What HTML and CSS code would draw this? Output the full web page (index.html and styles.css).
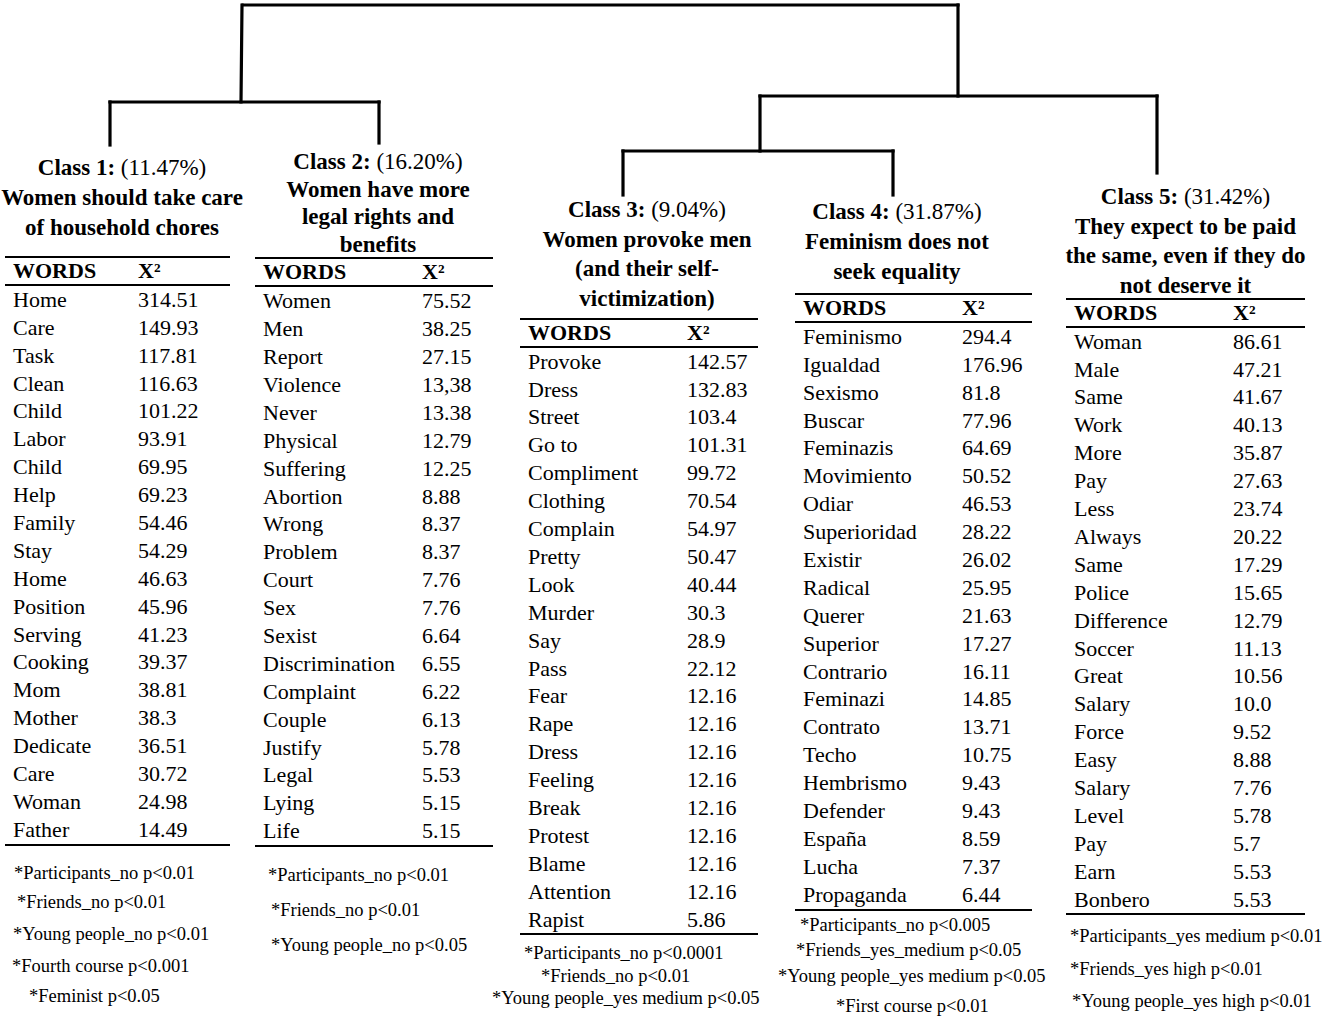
FILE: index.html
```html
<!DOCTYPE html>
<html lang="en">
<head>
<meta charset="utf-8">
<title>Classes dendrogram</title>
<link rel="stylesheet" href="styles.css">
</head>
<body>
<div class="page">
  <svg class="tree" width="1325" height="200" viewBox="0 0 1325 200" aria-hidden="true">
    <g fill="none" stroke="#000" stroke-width="3.2" stroke-linecap="square">
      <path d="M243 5 H958"/>
      <path d="M242 5 L241 102"/>
      <path d="M110 102 H379"/>
      <path d="M110 102 V145"/>
      <path d="M379 102 V143"/>
      <path d="M958 5 V96"/>
      <path d="M760 96 H1157"/>
      <path d="M1157 96 V173"/>
      <path d="M760 96 V151"/>
      <path d="M623 151 H893"/>
      <path d="M623 151 V195"/>
      <path d="M893 151 V195"/>
    </g>
  </svg>

  <div class="cols">
    <section class="col c1">
      <h2 class="head"><b>Class 1:</b> <span class="pct">(11.47%)</span><br>Women should take care<br>of household chores</h2>
      <div class="tbl">
        <div class="th">WORDS</div><div class="th">X²</div>
        <div>Home</div><div>314.51</div>
        <div>Care</div><div>149.93</div>
        <div>Task</div><div>117.81</div>
        <div>Clean</div><div>116.63</div>
        <div>Child</div><div>101.22</div>
        <div>Labor</div><div>93.91</div>
        <div>Child</div><div>69.95</div>
        <div>Help</div><div>69.23</div>
        <div>Family</div><div>54.46</div>
        <div>Stay</div><div>54.29</div>
        <div>Home</div><div>46.63</div>
        <div>Position</div><div>45.96</div>
        <div>Serving</div><div>41.23</div>
        <div>Cooking</div><div>39.37</div>
        <div>Mom</div><div>38.81</div>
        <div>Mother</div><div>38.3</div>
        <div>Dedicate</div><div>36.51</div>
        <div>Care</div><div>30.72</div>
        <div>Woman</div><div>24.98</div>
        <div>Father</div><div>14.49</div>
      </div>
      <div class="notes">
        <p class="fn">*Participants_no p&lt;0.01</p>
        <p class="fn">*Friends_no p&lt;0.01</p>
        <p class="fn">*Young people_no p&lt;0.01</p>
        <p class="fn">*Fourth course p&lt;0.001</p>
        <p class="fn">*Feminist p&lt;0.05</p>
      </div>
    </section>

    <section class="col c2">
      <h2 class="head"><b>Class 2:</b> <span class="pct">(16.20%)</span><br>Women have more<br>legal rights and<br>benefits</h2>
      <div class="tbl">
        <div class="th">WORDS</div><div class="th">X²</div>
        <div>Women</div><div>75.52</div>
        <div>Men</div><div>38.25</div>
        <div>Report</div><div>27.15</div>
        <div>Violence</div><div>13,38</div>
        <div>Never</div><div>13.38</div>
        <div>Physical</div><div>12.79</div>
        <div>Suffering</div><div>12.25</div>
        <div>Abortion</div><div>8.88</div>
        <div>Wrong</div><div>8.37</div>
        <div>Problem</div><div>8.37</div>
        <div>Court</div><div>7.76</div>
        <div>Sex</div><div>7.76</div>
        <div>Sexist</div><div>6.64</div>
        <div>Discrimination</div><div>6.55</div>
        <div>Complaint</div><div>6.22</div>
        <div>Couple</div><div>6.13</div>
        <div>Justify</div><div>5.78</div>
        <div>Legal</div><div>5.53</div>
        <div>Lying</div><div>5.15</div>
        <div>Life</div><div>5.15</div>
      </div>
      <div class="notes">
        <p class="fn">*Participants_no p&lt;0.01</p>
        <p class="fn">*Friends_no p&lt;0.01</p>
        <p class="fn">*Young people_no p&lt;0.05</p>
      </div>
    </section>

    <section class="col c3">
      <h2 class="head"><b>Class 3:</b> <span class="pct">(9.04%)</span><br>Women provoke men<br>(and their self-<br>victimization)</h2>
      <div class="tbl">
        <div class="th">WORDS</div><div class="th">X²</div>
        <div>Provoke</div><div>142.57</div>
        <div>Dress</div><div>132.83</div>
        <div>Street</div><div>103.4</div>
        <div>Go to</div><div>101.31</div>
        <div>Compliment</div><div>99.72</div>
        <div>Clothing</div><div>70.54</div>
        <div>Complain</div><div>54.97</div>
        <div>Pretty</div><div>50.47</div>
        <div>Look</div><div>40.44</div>
        <div>Murder</div><div>30.3</div>
        <div>Say</div><div>28.9</div>
        <div>Pass</div><div>22.12</div>
        <div>Fear</div><div>12.16</div>
        <div>Rape</div><div>12.16</div>
        <div>Dress</div><div>12.16</div>
        <div>Feeling</div><div>12.16</div>
        <div>Break</div><div>12.16</div>
        <div>Protest</div><div>12.16</div>
        <div>Blame</div><div>12.16</div>
        <div>Attention</div><div>12.16</div>
        <div>Rapist</div><div>5.86</div>
      </div>
      <div class="notes">
        <p class="fn">*Participants_no p&lt;0.0001</p>
        <p class="fn">*Friends_no p&lt;0.01</p>
        <p class="fn">*Young people_yes medium p&lt;0.05</p>
      </div>
    </section>

    <section class="col c4">
      <h2 class="head"><b>Class 4:</b> <span class="pct">(31.87%)</span><br>Feminism does not<br>seek equality</h2>
      <div class="tbl">
        <div class="th">WORDS</div><div class="th">X²</div>
        <div>Feminismo</div><div>294.4</div>
        <div>Igualdad</div><div>176.96</div>
        <div>Sexismo</div><div>81.8</div>
        <div>Buscar</div><div>77.96</div>
        <div>Feminazis</div><div>64.69</div>
        <div>Movimiento</div><div>50.52</div>
        <div>Odiar</div><div>46.53</div>
        <div>Superioridad</div><div>28.22</div>
        <div>Existir</div><div>26.02</div>
        <div>Radical</div><div>25.95</div>
        <div>Querer</div><div>21.63</div>
        <div>Superior</div><div>17.27</div>
        <div>Contrario</div><div>16.11</div>
        <div>Feminazi</div><div>14.85</div>
        <div>Contrato</div><div>13.71</div>
        <div>Techo</div><div>10.75</div>
        <div>Hembrismo</div><div>9.43</div>
        <div>Defender</div><div>9.43</div>
        <div>España</div><div>8.59</div>
        <div>Lucha</div><div>7.37</div>
        <div>Propaganda</div><div>6.44</div>
      </div>
      <div class="notes">
        <p class="fn">*Participants_no p&lt;0.005</p>
        <p class="fn">*Friends_yes_medium p&lt;0.05</p>
        <p class="fn">*Young people_yes medium p&lt;0.05</p>
        <p class="fn">*First course p&lt;0.01</p>
      </div>
    </section>

    <section class="col c5">
      <h2 class="head"><b>Class 5:</b> <span class="pct">(31.42%)</span><br>They expect to be paid<br>the same, even if they do<br>not deserve it</h2>
      <div class="tbl">
        <div class="th">WORDS</div><div class="th">X²</div>
        <div>Woman</div><div>86.61</div>
        <div>Male</div><div>47.21</div>
        <div>Same</div><div>41.67</div>
        <div>Work</div><div>40.13</div>
        <div>More</div><div>35.87</div>
        <div>Pay</div><div>27.63</div>
        <div>Less</div><div>23.74</div>
        <div>Always</div><div>20.22</div>
        <div>Same</div><div>17.29</div>
        <div>Police</div><div>15.65</div>
        <div>Difference</div><div>12.79</div>
        <div>Soccer</div><div>11.13</div>
        <div>Great</div><div>10.56</div>
        <div>Salary</div><div>10.0</div>
        <div>Force</div><div>9.52</div>
        <div>Easy</div><div>8.88</div>
        <div>Salary</div><div>7.76</div>
        <div>Level</div><div>5.78</div>
        <div>Pay</div><div>5.7</div>
        <div>Earn</div><div>5.53</div>
        <div>Bonbero</div><div>5.53</div>
      </div>
      <div class="notes">
        <p class="fn">*Participants_yes medium p&lt;0.01</p>
        <p class="fn">*Friends_yes high p&lt;0.01</p>
        <p class="fn">*Young people_yes high p&lt;0.01</p>
      </div>
    </section>
  </div>
</div>
</body>
</html>
```

FILE: styles.css
```css
html, body {
  margin: 0;
  padding: 0;
  background: #fff;
}

body {
  width: 1325px;
  height: 1021px;
  overflow: hidden;
  font-family: "Liberation Serif", "Times New Roman", serif;
  color: #000;
}

.page {
  position: relative;
  width: 1325px;
  height: 1021px;
}

.tree {
  position: absolute;
  left: 0;
  top: 0;
}

.cols {
  display: flex;
  align-items: flex-start;
  padding-left: 5px;
}

.col {
  flex: none;
}

.head {
  margin: 0;
  font-size: 23px;
  font-weight: bold;
  line-height: 30px;
  text-align: center;
  white-space: nowrap;
}

.head b {
  font-weight: bold;
}

.head .pct {
  font-weight: normal;
}

.tbl {
  display: grid;
  grid-template-columns: 159px 1fr;
  grid-auto-rows: 27.9px;
  border-top: 2px solid #000;
  border-bottom: 2px solid #000;
  padding-left: 8px;
  font-size: 22px;
  line-height: 27.9px;
  white-space: nowrap;
}

.tbl .th {
  font-weight: bold;
  height: 26px;
  line-height: 26px;
  border-bottom: 2px solid #000;
}

.tbl .th:first-child {
  margin-left: -8px;
  padding-left: 8px;
}

.notes {
  font-size: 18.5px;
  white-space: nowrap;
}

.fn {
  margin: 0;
  line-height: 30px;
}

/* Column 1 */
.c1 {
  width: 225px;
  padding-top: 153px;
}
.c1 .head {
  margin: 0 -19px 13px -10px;
}
.c1 .tbl {
  grid-template-columns: 125px 1fr;
}
.c1 .notes { padding-top: 12px; }
.c1 .fn:nth-child(1) { padding-left: 9px; }
.c1 .fn:nth-child(2) { padding-left: 12px; line-height: 28px; }
.c1 .fn:nth-child(3) { padding-left: 8px; line-height: 33px; margin-top: 2px; }
.c1 .fn:nth-child(4) { padding-left: 7px; }
.c1 .fn:nth-child(5) { padding-left: 24px; }

/* Column 2 */
.c2 {
  width: 238px;
  margin-left: 25px;
  padding-top: 148px;
}
.c2 .head {
  line-height: 27.6px;
  margin: 0 -8px -1px 0;
}
.c2 .notes { padding-top: 11px; }
.c2 .fn { line-height: 35px; }
.c2 .fn:nth-child(1) { padding-left: 13px; }
.c2 .fn:nth-child(2) { padding-left: 16px; }
.c2 .fn:nth-child(3) { padding-left: 16px; }

/* Column 3 */
.c3 {
  width: 238px;
  margin-left: 27px;
  padding-top: 195px;
}
.c3 .head {
  line-height: 29.7px;
  margin: 0 -16px 4px 0;
}
.c3 .notes { padding-top: 7px; }
.c3 .fn { line-height: 22.5px; }
.c3 .fn:nth-child(1) { text-indent: 4px; }
.c3 .fn:nth-child(2) { text-indent: 21px; }
.c3 .fn:nth-child(3) { text-indent: -28px; }

/* Column 4 */
.c4 {
  width: 237px;
  margin-left: 37px;
  padding-top: 197px;
}
.c4 .head {
  margin: 0 18px 6px -15px;
}
.c4 .notes { padding-top: 2px; }
.c4 .fn { line-height: 25.5px; }
.c4 .fn:nth-child(1) { text-indent: 5px; }
.c4 .fn:nth-child(2) { text-indent: 1px; }
.c4 .fn:nth-child(3) { text-indent: -17px; }
.c4 .fn:nth-child(4) { text-indent: 41px; margin-top: 5px; }

/* Column 5 */
.c5 {
  width: 239px;
  margin-left: 34px;
  padding-top: 182px;
}
.c5 .head {
  line-height: 29.7px;
  margin: 0 -20px -3px -20px;
}
.c5 .notes { padding-top: 5px; }
.c5 .fn { line-height: 32.5px; }
.c5 .fn:nth-child(1) { padding-left: 4px; }
.c5 .fn:nth-child(2) { padding-left: 4px; }
.c5 .fn:nth-child(3) { padding-left: 6px; }
```
